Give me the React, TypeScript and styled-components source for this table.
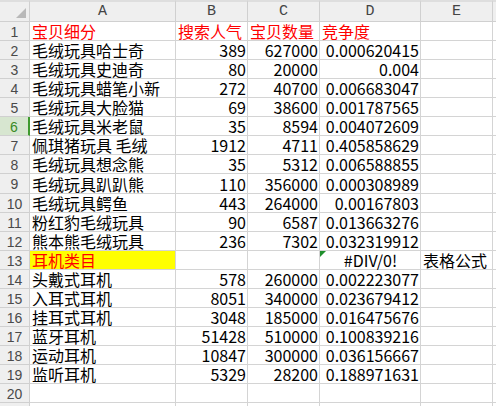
import React from "react";
import styled, { createGlobalStyle } from "styled-components";

const Global = createGlobalStyle`
  html, body { margin: 0; padding: 0; background: #ffffff; overflow: hidden; }
  * { box-sizing: border-box; }
`;

const Sheet = styled.div`
  display: grid;
  grid-template-columns: 30px 146px 72px 72px 101px 72px 1fr;
  grid-template-rows: 22px repeat(8, 19px) 20px repeat(11, 19px) 19px;
  width: 496px;
  height: 406px;
  overflow: hidden;
  background: #ffffff;
`;

const Corner = styled.div`
  position: relative;
  background: #efefef;
  border-top: 2px solid #dedede;
  border-right: 1px solid #d0d0d0;
  border-bottom: 1px solid #d0d0d0;
  &::after {
    content: "";
    position: absolute;
    right: 3px;
    bottom: 3px;
    width: 0;
    height: 0;
    border-left: 10px solid transparent;
    border-bottom: 10px solid #b9b9b9;
  }
`;

const ColHead = styled.div`
  background: #efefef;
  border-top: 2px solid #dedede;
  border-right: 1px solid #d0d0d0;
  border-bottom: 1px solid #d0d0d0;
  display: flex;
  align-items: center;
  justify-content: center;
  font-family: "Liberation Mono", monospace;
  font-size: 15px;
  line-height: 16px;
  color: #444444;
  padding-top: 1px;
`;

const RowHead = styled.div<{ $active?: boolean }>`
  background: ${(p) => (p.$active ? "#d7e6d0" : "#efefef")};
  border-right: ${(p) => (p.$active ? "2px solid #3f9a2f" : "1px solid #d0d0d0")};
  border-bottom: 1px solid #d0d0d0;
  display: flex;
  align-items: center;
  justify-content: center;
  font-family: "Liberation Sans", Arial, sans-serif;
  font-size: 14px;
  line-height: 16px;
  color: ${(p) => (p.$active ? "#3a8a26" : "#4a4a4a")};
  padding-top: 1px;
`;

const Cell = styled.div<{
  $align?: "left" | "right" | "center";
  $color?: string;
  $bg?: string;
}>`
  position: relative;
  border-right: 1px solid #d4d4d4;
  border-bottom: 1px solid #d4d4d4;
  background: ${(p) => p.$bg || "transparent"};
  color: ${(p) => p.$color || "#000000"};
  display: flex;
  align-items: flex-end;
  justify-content: ${(p) =>
    p.$align === "right" ? "flex-end" : p.$align === "center" ? "center" : "flex-start"};
  padding: 0 1px 0 2px;
  font-family: "Noto Sans CJK SC", "Noto Sans", sans-serif;
  font-size: 16px;
  line-height: 18px;
  font-variant-numeric: tabular-nums;
  white-space: nowrap;
  overflow: visible;
`;

const ErrorMark = styled.span`
  position: absolute;
  left: 0;
  top: 0;
  width: 0;
  height: 0;
  border-top: 6px solid #1f8f2c;
  border-right: 6px solid transparent;
`;

type Row = {
  a?: string;
  b?: string;
  c?: string;
  d?: string;
  e?: string;
  kind?: "header" | "category";
};

const rows: Row[] = [
  { a: "宝贝细分", b: "搜索人气", c: "宝贝数量", d: "竞争度", kind: "header" },
  { a: "毛绒玩具哈士奇", b: "389", c: "627000", d: "0.000620415" },
  { a: "毛绒玩具史迪奇", b: "80", c: "20000", d: "0.004" },
  { a: "毛绒玩具蜡笔小新", b: "272", c: "40700", d: "0.006683047" },
  { a: "毛绒玩具大脸猫", b: "69", c: "38600", d: "0.001787565" },
  { a: "毛绒玩具米老鼠", b: "35", c: "8594", d: "0.004072609" },
  { a: "佩琪猪玩具 毛绒", b: "1912", c: "4711", d: "0.405858629" },
  { a: "毛绒玩具想念熊", b: "35", c: "5312", d: "0.006588855" },
  { a: "毛绒玩具趴趴熊", b: "110", c: "356000", d: "0.000308989" },
  { a: "毛绒玩具鳄鱼", b: "443", c: "264000", d: "0.00167803" },
  { a: "粉红豹毛绒玩具", b: "90", c: "6587", d: "0.013663276" },
  { a: "熊本熊毛绒玩具", b: "236", c: "7302", d: "0.032319912" },
  { a: "耳机类目", d: "#DIV/0!", e: "表格公式", kind: "category" },
  { a: "头戴式耳机", b: "578", c: "260000", d: "0.002223077" },
  { a: "入耳式耳机", b: "8051", c: "340000", d: "0.023679412" },
  { a: "挂耳式耳机", b: "3048", c: "185000", d: "0.016475676" },
  { a: "蓝牙耳机", b: "51428", c: "510000", d: "0.100839216" },
  { a: "运动耳机", b: "10847", c: "300000", d: "0.036156667" },
  { a: "监听耳机", b: "5329", c: "28200", d: "0.188971631" },
  {},
  {},
];

export default function App() {
  return (
    <>
      <Global />
      <Sheet>
        <Corner />
        {["A", "B", "C", "D", "E", ""].map((l, i) => (
          <ColHead key={i}>{l}</ColHead>
        ))}
        {rows.map((r, i) => {
          const n = i + 1;
          const isHeader = r.kind === "header";
          const isCat = r.kind === "category";
          const red = isHeader || isCat ? "#ff0000" : undefined;
          return (
            <React.Fragment key={n}>
              <RowHead $active={n === 6}>{n <= 20 ? n : ""}</RowHead>
              <Cell $color={red} $bg={isCat ? "#ffff00" : undefined}>
                {r.a}
              </Cell>
              <Cell $align={isHeader ? "left" : "right"} $color={red}>
                {r.b}
              </Cell>
              <Cell $align={isHeader ? "left" : "right"} $color={red}>
                {r.c}
              </Cell>
              <Cell
                $align={isHeader ? "left" : isCat ? "center" : "right"}
                $color={isHeader ? red : undefined}
              >
                {isCat && <ErrorMark />}
                {r.d}
              </Cell>
              <Cell>{r.e}</Cell>
              <Cell />
            </React.Fragment>
          );
        })}
      </Sheet>
    </>
  );
}
